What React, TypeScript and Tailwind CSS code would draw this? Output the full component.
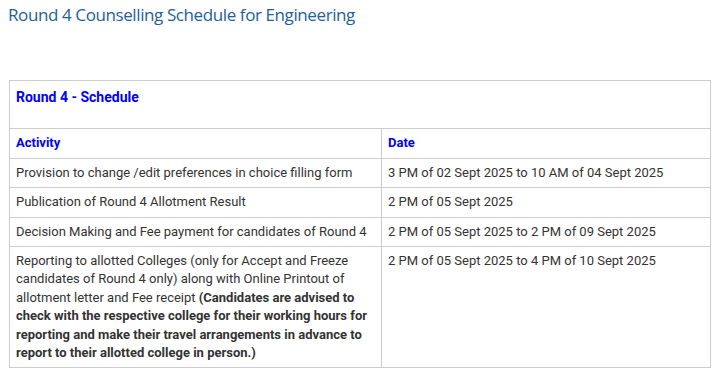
import React from "react";

const rows: { a: React.ReactNode; d: string }[] = [
  { a: "Provision to change /edit preferences in choice filling form", d: "3 PM of 02 Sept 2025 to 10 AM of 04 Sept 2025" },
  { a: "Publication of Round 4 Allotment Result", d: "2 PM of 05 Sept 2025" },
  { a: "Decision Making and Fee payment for candidates of Round 4", d: "2 PM of 05 Sept 2025 to 2 PM of 09 Sept 2025" },
  {
    a: (
      <>
        Reporting to allotted Colleges (only for Accept and Freeze candidates of Round 4 only) along with Online Printout of allotment letter and Fee receipt{" "}
        <strong className="font-bold">
          (Candidates are advised to check with the respective college for their working hours for reporting and make their travel arrangements in advance to report to their allotted college in person.)
        </strong>
      </>
    ),
    d: "2 PM of 05 Sept 2025 to 4 PM of 10 Sept 2025",
  },
];

export default function App() {
  return (
    <div className="w-[715px] h-[370px] bg-white overflow-hidden" style={{ fontFamily: "Roboto, sans-serif" }}>
      <h1
        className="pl-[8px] pt-[4px] text-[17px] leading-[22px] text-[#22609f] font-normal tracking-[-0.4px]"
        style={{ fontFamily: "'Open Sans', sans-serif" }}
      >
        Round 4 Counselling Schedule for Engineering
      </h1>
      <table className="ml-[9px] mt-[54px] w-[702px] border-collapse text-[13px] leading-[18.4px] text-[#333]">
        <colgroup>
          <col className="w-[372px]" />
          <col />
        </colgroup>
        <tbody>
          <tr>
            <td colSpan={2} className="border border-[#cccccc] px-[6px] pt-[7px] pb-[21px] align-top">
              <span className="font-bold text-[#0000ff] text-[14px]">Round 4 - Schedule</span>
            </td>
          </tr>
          <tr>
            <td className="border border-[#cccccc] px-[6px] py-[5px] align-top font-bold text-[#0000ff]">Activity</td>
            <td className="border border-[#cccccc] px-[6px] py-[5px] align-top font-bold text-[#0000ff]">Date</td>
          </tr>
          {rows.map((r, i) => (
            <tr key={i}>
              <td className="border border-[#cccccc] px-[6px] py-[5px] align-top">{r.a}</td>
              <td className="border border-[#cccccc] px-[6px] py-[5px] align-top">{r.d}</td>
            </tr>
          ))}
        </tbody>
      </table>
    </div>
  );
}
